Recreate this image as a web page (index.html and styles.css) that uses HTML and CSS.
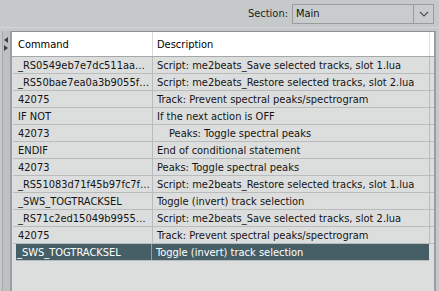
FILE: index.html
```html
<!DOCTYPE html>
<html lang="en">
<head>
    <meta charset="UTF-8">
    <title>Actions</title>
    <link rel="stylesheet" href="styles.css">
</head>
<body>
    <div class="topbar">
        <span class="label">Section:</span>
        <div class="select">
            <span class="select-value">Main</span>
            <span class="select-arrow">
                <svg width="10" height="6" viewBox="0 0 10 6"><path d="M1 1 L5 5 L9 1" fill="none" stroke="#505454" stroke-width="1.2"/></svg>
            </span>
        </div>
    </div>

    <div class="main">
        <div class="side">
            <div class="side-arrows">
                <svg width="5" height="15" viewBox="0 0 5 15"><path d="M4 0 L0 3 L4 6 Z" fill="#3c4040"/><path d="M0 8 L4 11 L0 14 Z" fill="#3c4040"/></svg>
            </div>
        </div>

        <div class="list">
            <div class="row head">
                <div class="cell">Command</div>
                <div class="cell">Description</div>
            </div>
            <div class="row">
                <div class="cell">_RS0549eb7e7dc511aab2c1e7c1b0e3</div>
                <div class="cell">Script: me2beats_Save selected tracks, slot 1.lua</div>
            </div>
            <div class="row">
                <div class="cell">_RS50bae7ea0a3b9055f2e1c0a7</div>
                <div class="cell">Script: me2beats_Restore selected tracks, slot 2.lua</div>
            </div>
            <div class="row">
                <div class="cell">42075</div>
                <div class="cell">Track: Prevent spectral peaks/spectrogram</div>
            </div>
            <div class="row">
                <div class="cell">IF NOT</div>
                <div class="cell">If the next action is OFF</div>
            </div>
            <div class="row">
                <div class="cell">42073</div>
                <div class="cell indent">Peaks: Toggle spectral peaks</div>
            </div>
            <div class="row">
                <div class="cell">ENDIF</div>
                <div class="cell">End of conditional statement</div>
            </div>
            <div class="row">
                <div class="cell">42073</div>
                <div class="cell">Peaks: Toggle spectral peaks</div>
            </div>
            <div class="row">
                <div class="cell">_RS51083d71f45b97fc7f3a2d11</div>
                <div class="cell">Script: me2beats_Restore selected tracks, slot 1.lua</div>
            </div>
            <div class="row">
                <div class="cell">_SWS_TOGTRACKSEL</div>
                <div class="cell">Toggle (invert) track selection</div>
            </div>
            <div class="row">
                <div class="cell">_RS71c2ed15049b99550a8e2f4d</div>
                <div class="cell">Script: me2beats_Save selected tracks, slot 2.lua</div>
            </div>
            <div class="row">
                <div class="cell">42075</div>
                <div class="cell">Track: Prevent spectral peaks/spectrogram</div>
            </div>
            <div class="row selected">
                <div class="cell">_SWS_TOGTRACKSEL</div>
                <div class="cell">Toggle (invert) track selection</div>
            </div>
        </div>
    </div>
</body>
</html>
```

FILE: styles.css
```css
body {
    margin: 0;
    width: 439px;
    height: 291px;
    overflow: hidden;
    background-color: #c5c9c9;
    font-family: "DejaVu Sans Condensed", "DejaVu Sans", sans-serif;
    font-stretch: condensed;
    font-size: 11px;
    color: #141414;
}

.topbar {
    height: 28px;
    box-sizing: border-box;
    padding: 4px 5px 0 0;
    display: flex;
    justify-content: flex-end;
    align-items: flex-start;
    border-bottom: 1px solid #d2d5d5;
}

.label {
    margin-right: 4px;
    line-height: 20px;
    color: #202424;
}

.select {
    width: 142px;
    height: 20px;
    box-sizing: border-box;
    border: 1px solid #989c9c;
    display: flex;
    background-color: #c8cccc;
}

.select-value {
    flex: 1;
    padding-left: 3px;
    line-height: 18px;
}

.select-arrow {
    width: 19px;
    border-left: 1px solid #989c9c;
    display: flex;
    justify-content: center;
    align-items: center;
}

.main {
    display: flex;
    height: 260px;
    padding-top: 3px;
}

.side {
    width: 7px;
    margin-left: 2px;
    border-left: 1px solid #a6aaaa;
    background-color: #bdc1c1;
}

.side-arrows {
    padding: 6px 0 0 1px;
    line-height: 0;
}

.list {
    width: 422px;
    border: 2px solid #9a9e9e;
    border-bottom: none;
    border-top: 1px solid #8e9292;
    background-color: #dcdedd;
}

.row {
    display: grid;
    grid-template-columns: 140px 277px;
    height: 17px;
    border-bottom: 1px solid #b8bcbc;
    box-sizing: border-box;
    margin-left: 1px;
}

.row .cell {
    padding-left: 5px;
    line-height: 17px;
    white-space: nowrap;
    overflow: hidden;
    text-overflow: ellipsis;
}

.row .cell:first-child {
    border-right: 1px solid #b8bcbc;
    padding-right: 1px;
}

.row .cell:last-child {
    border-right: 1px solid #b8bcbc;
    padding-left: 4px;
}

.row .indent {
    padding-left: 16px !important;
}

.head {
    height: 25px;
    background-color: #ffffff;
    border-bottom: 1px solid #a4a8a8;
    margin-left: 0;
    grid-template-columns: 141px 277px;
}

.head .cell {
    line-height: 25px;
    color: #000;
}

.head .cell:first-child {
    padding-left: 6px;
    border-right: 1px solid #dcdcdc;
}

.head .cell:last-child {
    border-right: 1px solid #dcdcdc;
}

.selected {
    background-color: #465f66;
    color: #ffffff;
    margin-left: 4px;
    grid-template-columns: 136px 277px;
    width: 413px;
}

.selected .cell:first-child {
    padding-left: 1px;
    border-right-color: #8ea0a4;
}

.selected .cell:last-child {
    border-right-color: #465f66;
}
```
